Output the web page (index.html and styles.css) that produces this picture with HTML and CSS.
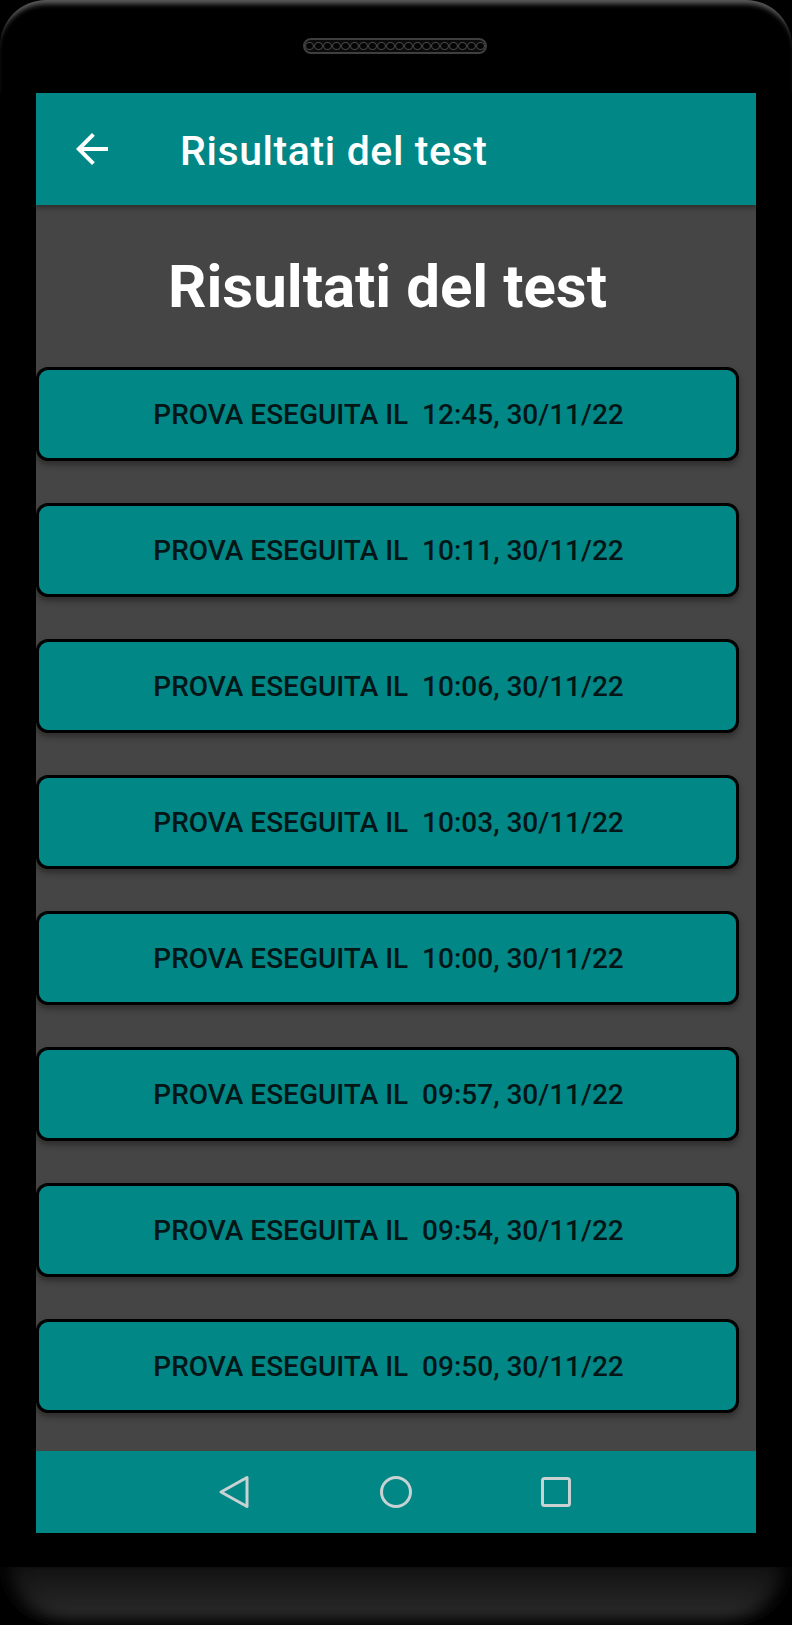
FILE: index.html
```html
<!DOCTYPE html>
<html lang="it">
<head>
<meta charset="utf-8">
<title>Risultati del test</title>
<link rel="stylesheet" href="styles.css">
</head>
<body>
<div class="phone">
  <div class="top-bezel">
    <div class="speaker">
      <span></span><span></span><span></span><span></span><span></span>
      <span></span><span></span><span></span><span></span><span></span>
      <span></span><span></span><span></span><span></span><span></span>
      <span></span><span></span><span></span><span></span><span></span>
    </div>
  </div>
  <div class="screen">
    <header class="toolbar">
      <button class="nav-back" aria-label="Indietro">
        <svg width="48" height="48" viewBox="0 0 24 24"><path d="M20 11H7.83l5.59-5.59L12 4l-8 8 8 8 1.41-1.41L7.83 13H20v-2z" fill="#fff"/></svg>
      </button>
      <h1 class="toolbar-title">Risultati del test</h1>
    </header>
    <main class="content">
      <h2 class="heading">Risultati del test</h2>
      <ul class="results">
        <li><button class="result">PROVA ESEGUITA IL&nbsp; 12:45, 30/11/22</button></li>
        <li><button class="result">PROVA ESEGUITA IL&nbsp; 10:11, 30/11/22</button></li>
        <li><button class="result">PROVA ESEGUITA IL&nbsp; 10:06, 30/11/22</button></li>
        <li><button class="result">PROVA ESEGUITA IL&nbsp; 10:03, 30/11/22</button></li>
        <li><button class="result">PROVA ESEGUITA IL&nbsp; 10:00, 30/11/22</button></li>
        <li><button class="result">PROVA ESEGUITA IL&nbsp; 09:57, 30/11/22</button></li>
        <li><button class="result">PROVA ESEGUITA IL&nbsp; 09:54, 30/11/22</button></li>
        <li><button class="result">PROVA ESEGUITA IL&nbsp; 09:50, 30/11/22</button></li>
      </ul>
    </main>
    <nav class="navbar">
      <svg class="nav-icon" width="34" height="36" viewBox="0 0 34 36"><path d="M4 18 L30 3.5 L30 32.5 Z" fill="none" stroke="#c9d2d2" stroke-width="3" stroke-linejoin="round"/></svg>
      <svg class="nav-icon" width="34" height="34" viewBox="0 0 34 34"><circle cx="17" cy="17" r="14.5" fill="none" stroke="#c9d2d2" stroke-width="3"/></svg>
      <svg class="nav-icon" width="30" height="30" viewBox="0 0 30 30"><rect x="1.5" y="1.5" width="27" height="27" rx="2" fill="none" stroke="#c9d2d2" stroke-width="3"/></svg>
    </nav>
  </div>
  <div class="chin"></div>
  <div class="bottom-bezel"></div>
</div>
</body>
</html>
```

FILE: styles.css
```css
* { box-sizing: border-box; }

html, body {
  margin: 0;
  padding: 0;
  background: #000;
}

body {
  width: 792px;
  height: 1625px;
  overflow: hidden;
  font-family: Roboto, "Noto Sans", sans-serif;
}

.phone {
  width: 792px;
  height: 1625px;
  display: flex;
  flex-direction: column;
  background: #000;
}

.top-bezel {
  height: 93px;
  border-radius: 46px 46px 0 0;
  box-shadow: inset 0 7px 5px -3px #5c5c5c;
  display: flex;
  justify-content: center;
  padding-top: 38px;
}

.speaker {
  width: 184px;
  height: 16px;
  margin-left: -2px;
  border-radius: 8px;
  border: 2px solid #3e3e3e;
  background: #0b0b0b;
  display: flex;
  align-items: center;
  justify-content: center;
  gap: 0.5px;
}

.speaker span {
  width: 8.5px;
  height: 8.5px;
  border-radius: 50%;
  border: 1px solid #4a4a4a;
  background: #050505;
}

.screen {
  margin-left: 36px;
  width: 720px;
  display: flex;
  flex-direction: column;
}

.toolbar {
  height: 112px;
  background: #018786;
  display: flex;
  align-items: center;
  position: relative;
  z-index: 1;
  box-shadow: 0 3px 5px rgba(0, 0, 0, 0.35);
}

.nav-back {
  width: 48px;
  height: 48px;
  margin-left: 32px;
  padding: 0;
  border: 0;
  background: none;
  display: flex;
}

.toolbar-title {
  margin: 4px 0 0 64px;
  font-size: 41px;
  font-weight: 500;
  color: #fff;
  letter-spacing: 0.6px;
}

.content {
  height: 1246px;
  background: #454545;
  padding: 47px 17px 0 0;
}

.heading {
  margin: 0;
  text-align: center;
  font-size: 60px;
  font-weight: 700;
  color: #fff;
  line-height: 70px;
}

.results {
  list-style: none;
  margin: 45px 0 0;
  padding: 0;
  display: flex;
  flex-direction: column;
  gap: 42px;
}

.result {
  width: 100%;
  height: 94px;
  background: #018786;
  border: 3px solid #000;
  border-radius: 12px;
  box-shadow: 0 4px 6px rgba(0, 0, 0, 0.35);
  font-family: Roboto, "Noto Sans", sans-serif;
  font-size: 28px;
  font-weight: 500;
  color: #031617;
  padding: 0 0 0 2px;
  display: flex;
  align-items: center;
  justify-content: center;
  white-space: pre;
}

.navbar {
  height: 82px;
  background: #018786;
  display: flex;
  align-items: center;
  justify-content: center;
  gap: 0;
}

.nav-icon:nth-child(1) { margin-right: 128px; margin-left: -4px; }
.nav-icon:nth-child(2) { margin-right: 128px; }

.chin {
  height: 34px;
}

.bottom-bezel {
  height: 58px;
  background: linear-gradient(#121212, #1d1d1d 40%, #2a2a2a 80%, #262626);
  border-radius: 0 0 60px 60px;
  box-shadow: inset 18px -10px 18px -10px #000, inset -18px -10px 18px -10px #000;
}
```
